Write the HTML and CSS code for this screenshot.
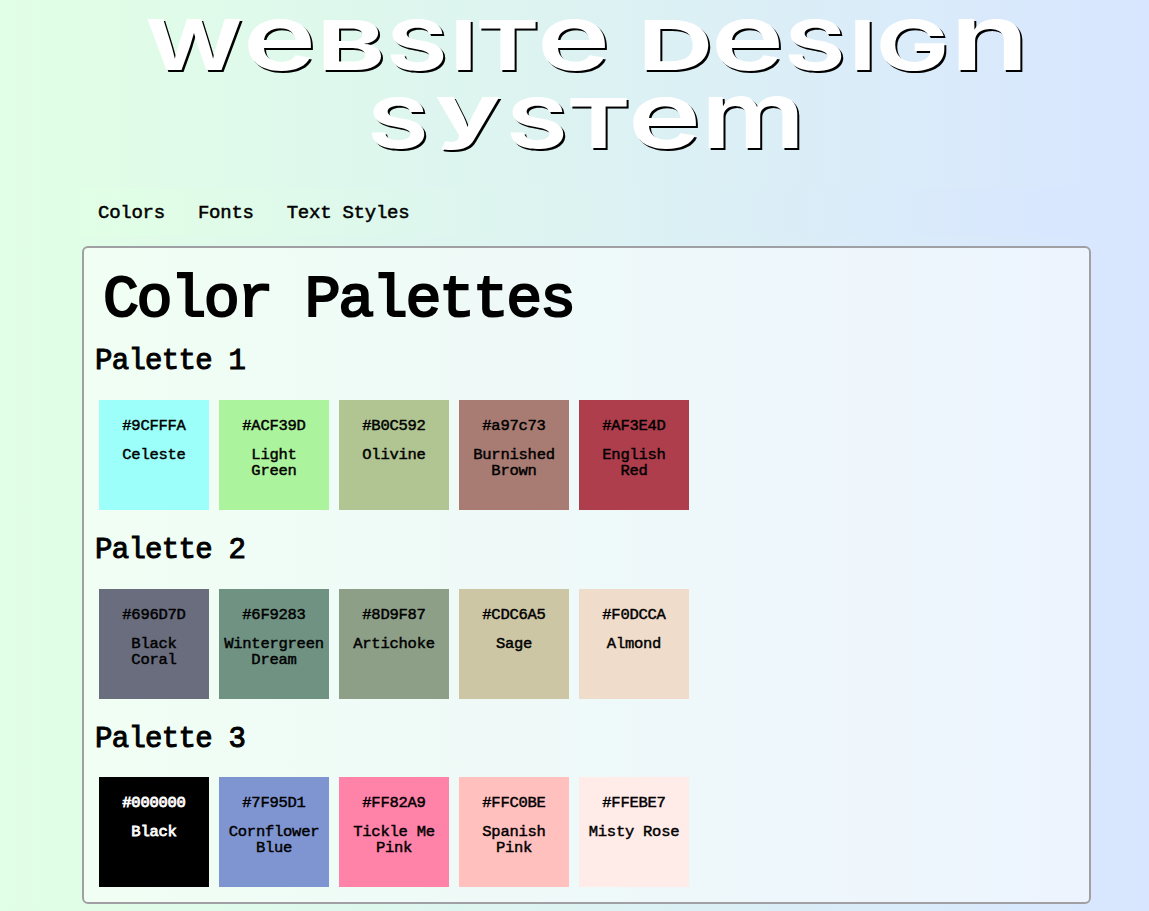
FILE: index.html
```html
<!DOCTYPE html>
<html lang="en">
<head>
<meta charset="utf-8">
<title>Website Design System</title>
<link rel="stylesheet" href="styles.css">
</head>
<body>
<header>
<svg class="title" width="1009" height="188" viewBox="82 0 1009 188" role="heading" aria-level="1">
<text y="70"><tspan class="lower" x="145" textLength="98" lengthAdjust="spacingAndGlyphs">w</tspan><tspan class="lower" x="243" textLength="73" lengthAdjust="spacingAndGlyphs">e</tspan><tspan x="317" textLength="68" lengthAdjust="spacingAndGlyphs">B</tspan><tspan x="387" textLength="60" lengthAdjust="spacingAndGlyphs">S</tspan><tspan x="450" textLength="27" lengthAdjust="spacingAndGlyphs">I</tspan><tspan x="476" textLength="63" lengthAdjust="spacingAndGlyphs">T</tspan><tspan class="lower" x="537" textLength="73" lengthAdjust="spacingAndGlyphs">e</tspan></text>
<text y="70"><tspan x="638" textLength="75" lengthAdjust="spacingAndGlyphs">D</tspan><tspan class="lower" x="711" textLength="73" lengthAdjust="spacingAndGlyphs">e</tspan><tspan x="785" textLength="60" lengthAdjust="spacingAndGlyphs">S</tspan><tspan x="849" textLength="27" lengthAdjust="spacingAndGlyphs">I</tspan><tspan x="876" textLength="73" lengthAdjust="spacingAndGlyphs">G</tspan><tspan class="lower" x="950" textLength="79" lengthAdjust="spacingAndGlyphs">n</tspan></text>
<text y="148"><tspan x="368" textLength="60" lengthAdjust="spacingAndGlyphs">S</tspan><tspan class="tail" x="435" y="135" textLength="66" lengthAdjust="spacingAndGlyphs">y</tspan><tspan x="507" y="148" textLength="60" lengthAdjust="spacingAndGlyphs">S</tspan><tspan x="567" textLength="63" lengthAdjust="spacingAndGlyphs">T</tspan><tspan class="lower" x="628" textLength="73" lengthAdjust="spacingAndGlyphs">e</tspan><tspan class="lower" x="701" textLength="104" lengthAdjust="spacingAndGlyphs">m</tspan></text>
</svg>
</header>
<nav class="nav"><a>Colors</a><a>Fonts</a><a>Text Styles</a></nav>
<main class="panel">
<h1>Color Palettes</h1>
<h2>Palette 1</h2>
<div class="row">
<div class="card celeste"><p>#9CFFFA</p><p>Celeste</p></div>
<div class="card light-green"><p>#ACF39D</p><p>Light<br>Green</p></div>
<div class="card olivine"><p>#B0C592</p><p>Olivine</p></div>
<div class="card brown"><p>#a97c73</p><p>Burnished<br>Brown</p></div>
<div class="card red"><p>#AF3E4D</p><p>English<br>Red</p></div>
</div>
<h2>Palette 2</h2>
<div class="row">
<div class="card coral"><p>#696D7D</p><p>Black<br>Coral</p></div>
<div class="card wintergreen"><p>#6F9283</p><p>Wintergreen<br>Dream</p></div>
<div class="card artichoke"><p>#8D9F87</p><p>Artichoke</p></div>
<div class="card sage"><p>#CDC6A5</p><p>Sage</p></div>
<div class="card almond"><p>#F0DCCA</p><p>Almond</p></div>
</div>
<h2 class="last">Palette 3</h2>
<div class="row">
<div class="card black"><p>#000000</p><p>Black</p></div>
<div class="card cornflower"><p>#7F95D1</p><p>Cornflower<br>Blue</p></div>
<div class="card tickle"><p>#FF82A9</p><p>Tickle Me<br>Pink</p></div>
<div class="card spanish"><p>#FFC0BE</p><p>Spanish<br>Pink</p></div>
<div class="card misty"><p>#FFEBE7</p><p>Misty Rose</p></div>
</div>
</main>
</body>
</html>
```
FILE: styles.css
```css
* { box-sizing: border-box; }
html { height: 100%; overflow: hidden; }
body {
  margin: 0;
  padding: 0 58px 0 82px;
  height: 911px;
  background: linear-gradient(90deg, #e1ffe5, #d8e6ff);
  font-family: "Liberation Mono", monospace;
  font-weight: 400;
  color: #000;
}
.title {
  display: block;
  overflow: visible;
  font-family: Inter, sans-serif;
  font-size: 69px;
  font-weight: 700;
  fill: #fff;
  filter: drop-shadow(2px 2px 0 #000);
}
.title .lower { font-size: 93px; font-weight: 600; }
.title .tail { font-size: 70px; }
.nav {
  display: flex;
  gap: 33px;
  height: 48px;
  padding: 2px 16px 0;
  align-items: center;
  background: linear-gradient(90deg, #e1ffe5, #d8e6ff);
  font-size: 19px;
  letter-spacing: -0.25px;
  -webkit-text-stroke: 0.5px;
}
.panel {
  margin-top: 10px;
  height: 658px;
  padding: 0 11px;
  border: 2px solid #a0a0a4;
  border-radius: 6px;
  background: rgba(255, 255, 255, 0.53);
}
h1 {
  margin: 18px 0 0 8px;
  font-size: 60px;
  font-weight: 400;
  line-height: 68px;
  letter-spacing: -2.4px;
  -webkit-text-stroke: 2.2px;
}
h2 {
  margin: 0;
  height: 66px;
  padding-top: 10px;
  font-size: 29px;
  font-weight: 400;
  line-height: 36px;
  letter-spacing: -0.7px;
  -webkit-text-stroke: 1px;
}
h2.last { height: 65px; }
.row { display: flex; gap: 10px; margin: 0 0 13px 4px; }
.card {
  width: 110px;
  height: 110px;
  padding-top: 18px;
  text-align: center;
  font-size: 15.5px;
  line-height: 16px;
  letter-spacing: -0.25px;
  -webkit-text-stroke: 0.45px;
}
.card p { margin: 0 0 13px; }
.celeste { background: #9cfffa; }
.light-green { background: #acf39d; }
.olivine { background: #b0c592; }
.brown { background: #a97c73; }
.red { background: #af3e4d; }
.coral { background: #696d7d; }
.wintergreen { background: #6f9283; }
.artichoke { background: #8d9f87; }
.sage { background: #cdc6a5; }
.almond { background: #f0dcca; }
.black { background: #000; color: #fff; -webkit-text-stroke: 0.8px; }
.cornflower { background: #7f95d1; }
.tickle { background: #ff82a9; }
.spanish { background: #ffc0be; }
.misty { background: #ffebe7; }
```
